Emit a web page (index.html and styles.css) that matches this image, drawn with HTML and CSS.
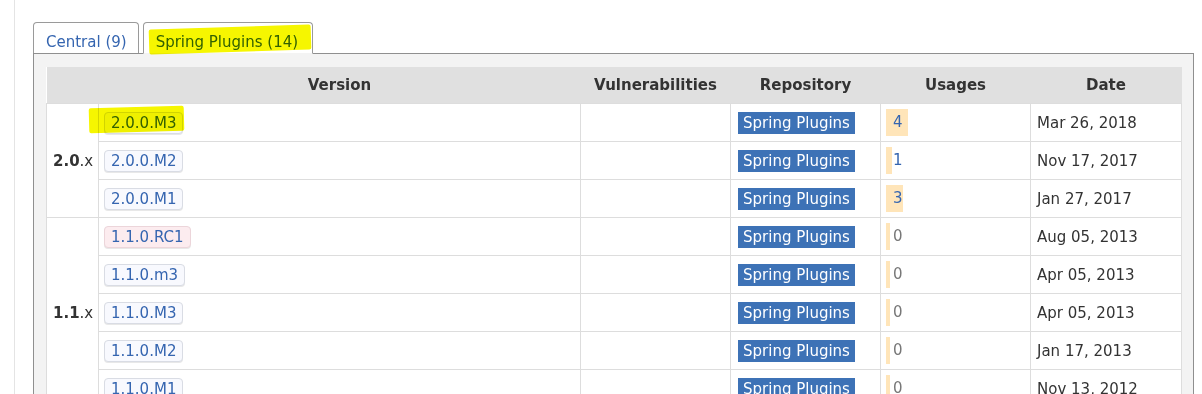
FILE: index.html
```html
<!DOCTYPE html>
<html lang="en">
<head>
    <meta charset="UTF-8">
    <meta name="viewport" content="width=device-width, initial-scale=1.0">
    <title>Versions</title>
    <link rel="stylesheet" href="styles.css">
</head>
<body>
<div class="page">
    <div class="tabs">
        <a class="tab" href="#">Central (9)</a>
        <a class="tab active" href="#">Spring Plugins (14)<span class="marker marker-tab"></span></a>
    </div>
    <div class="panel">
        <table class="grid">
            <colgroup>
                <col class="w-group">
                <col class="w-version">
                <col class="w-mid">
                <col class="w-mid">
                <col class="w-mid">
                <col class="w-date">
            </colgroup>
            <thead>
                <tr>
                    <th></th>
                    <th>Version</th>
                    <th>Vulnerabilities</th>
                    <th>Repository</th>
                    <th>Usages</th>
                    <th>Date</th>
                </tr>
            </thead>
            <tbody>
                <tr>
                    <td class="group" rowspan="3"><b>2.0</b>.x</td>
                    <td><span class="vwrap"><span class="marker marker-ver"></span><a class="vbadge" href="#">2.0.0.M3</a></span></td>
                    <td></td>
                    <td><span class="repo">Spring Plugins</span></td>
                    <td><div class="usage"><span class="bar" style="width:22px"></span><a href="#">4</a></div></td>
                    <td class="date">Mar 26, 2018</td>
                </tr>
                <tr>
                    <td><a class="vbadge" href="#">2.0.0.M2</a></td>
                    <td></td>
                    <td><span class="repo">Spring Plugins</span></td>
                    <td><div class="usage"><span class="bar" style="width:6px"></span><a href="#">1</a></div></td>
                    <td class="date">Nov 17, 2017</td>
                </tr>
                <tr>
                    <td><a class="vbadge" href="#">2.0.0.M1</a></td>
                    <td></td>
                    <td><span class="repo">Spring Plugins</span></td>
                    <td><div class="usage"><span class="bar" style="width:17px"></span><a href="#">3</a></div></td>
                    <td class="date">Jan 27, 2017</td>
                </tr>
                <tr>
                    <td class="group" rowspan="5"><b>1.1</b>.x</td>
                    <td><a class="vbadge rc" href="#">1.1.0.RC1</a></td>
                    <td></td>
                    <td><span class="repo">Spring Plugins</span></td>
                    <td><div class="usage"><span class="bar" style="width:4px"></span><span class="zero">0</span></div></td>
                    <td class="date">Aug 05, 2013</td>
                </tr>
                <tr>
                    <td><a class="vbadge" href="#">1.1.0.m3</a></td>
                    <td></td>
                    <td><span class="repo">Spring Plugins</span></td>
                    <td><div class="usage"><span class="bar" style="width:4px"></span><span class="zero">0</span></div></td>
                    <td class="date">Apr 05, 2013</td>
                </tr>
                <tr>
                    <td><a class="vbadge" href="#">1.1.0.M3</a></td>
                    <td></td>
                    <td><span class="repo">Spring Plugins</span></td>
                    <td><div class="usage"><span class="bar" style="width:4px"></span><span class="zero">0</span></div></td>
                    <td class="date">Apr 05, 2013</td>
                </tr>
                <tr>
                    <td><a class="vbadge" href="#">1.1.0.M2</a></td>
                    <td></td>
                    <td><span class="repo">Spring Plugins</span></td>
                    <td><div class="usage"><span class="bar" style="width:4px"></span><span class="zero">0</span></div></td>
                    <td class="date">Jan 17, 2013</td>
                </tr>
                <tr>
                    <td><a class="vbadge" href="#">1.1.0.M1</a></td>
                    <td></td>
                    <td><span class="repo">Spring Plugins</span></td>
                    <td><div class="usage"><span class="bar" style="width:4px"></span><span class="zero">0</span></div></td>
                    <td class="date">Nov 13, 2012</td>
                </tr>
            </tbody>
        </table>
    </div>
</div>
</body>
</html>
```

FILE: styles.css
```css
html, body {
    margin: 0;
    overflow: hidden;
    background-color: #ffffff;
}

body {
    font-family: "DejaVu Sans", Verdana, sans-serif;
    font-size: 15px;
    color: #333333;
}

a {
    color: #3565b0;
    text-decoration: none;
}

.page {
    margin-left: 14px;
    border-left: 1px solid #e4e4e4;
    padding: 22px 8px 0 18px;
    min-height: 400px;
}

/* tabs */
.tabs {
    display: flex;
    gap: 4px;
}

.tab {
    position: relative;
    padding: 8px 11px 0 12px;
    height: 22px;
    line-height: 22px;
    border: 1px solid #9a9a9a;
    border-bottom: none;
    border-radius: 4px 4px 0 0;
    background-color: #ffffff;
}

.tab.active {
    padding-right: 14px;
    border-bottom: 1px solid #f3f3f3;
    margin-bottom: -1px;
}

.marker {
    position: absolute;
    background-color: #f6f600;
    mix-blend-mode: multiply;
    border-radius: 2px;
}

.marker-tab {
    left: 5px;
    top: 4px;
    width: 162px;
    height: 25px;
    transform: rotate(-1.8deg);
}

/* panel */
.panel {
    border: 1px solid #8f8f8f;
    background-color: #f3f3f3;
    padding: 13px 12px 12px 12px;
}

.grid {
    width: 1135px;
    table-layout: fixed;
    border-collapse: collapse;
    background-color: #ffffff;
}

.w-group { width: 52px; }
.w-version { width: 482px; }
.w-mid { width: 150px; }
.w-date { width: 151px; }

.grid th {
    height: 36px;
    padding: 0;
    background-color: #e0e0e0;
    font-weight: bold;
    text-align: center;
    color: #333333;
}

.grid td {
    height: 37px;
    padding: 0 0 0 5px;
    border: 1px solid #dddddd;
    white-space: nowrap;
}

.grid td.group {
    padding-left: 6px;
    vertical-align: middle;
}

.grid td.date {
    padding-left: 6px;
}

.vwrap {
    position: relative;
    display: inline-block;
}

.marker-ver {
    left: -15px;
    top: -5px;
    width: 95px;
    height: 25px;
    transform: rotate(-1.5deg);
}

.vbadge {
    display: inline-block;
    padding: 0 6px;
    line-height: 20px;
    border: 1px solid #d9dce4;
    border-radius: 4px;
    background-color: #f8f9fe;
    box-shadow: 0 1px 0 #e8e8e8;
}

.vbadge.rc {
    background-color: #fcecef;
    border-color: #ecd5da;
}

.repo {
    display: inline-block;
    margin-left: 2px;
    padding: 0 5px;
    line-height: 22px;
    background-color: #3d72b6;
    color: #ffffff;
}

.grid td:nth-last-child(2) {
    padding-left: 5px;
}

.usage {
    display: grid;
    align-items: center;
    height: 27px;
}

.usage > * {
    grid-area: 1 / 1;
}

.bar {
    height: 27px;
    background-color: #ffe5b9;
}

.usage a,
.usage .zero {
    padding-left: 7px;
    margin-top: -2px;
}

.zero {
    color: #777777;
}
```
